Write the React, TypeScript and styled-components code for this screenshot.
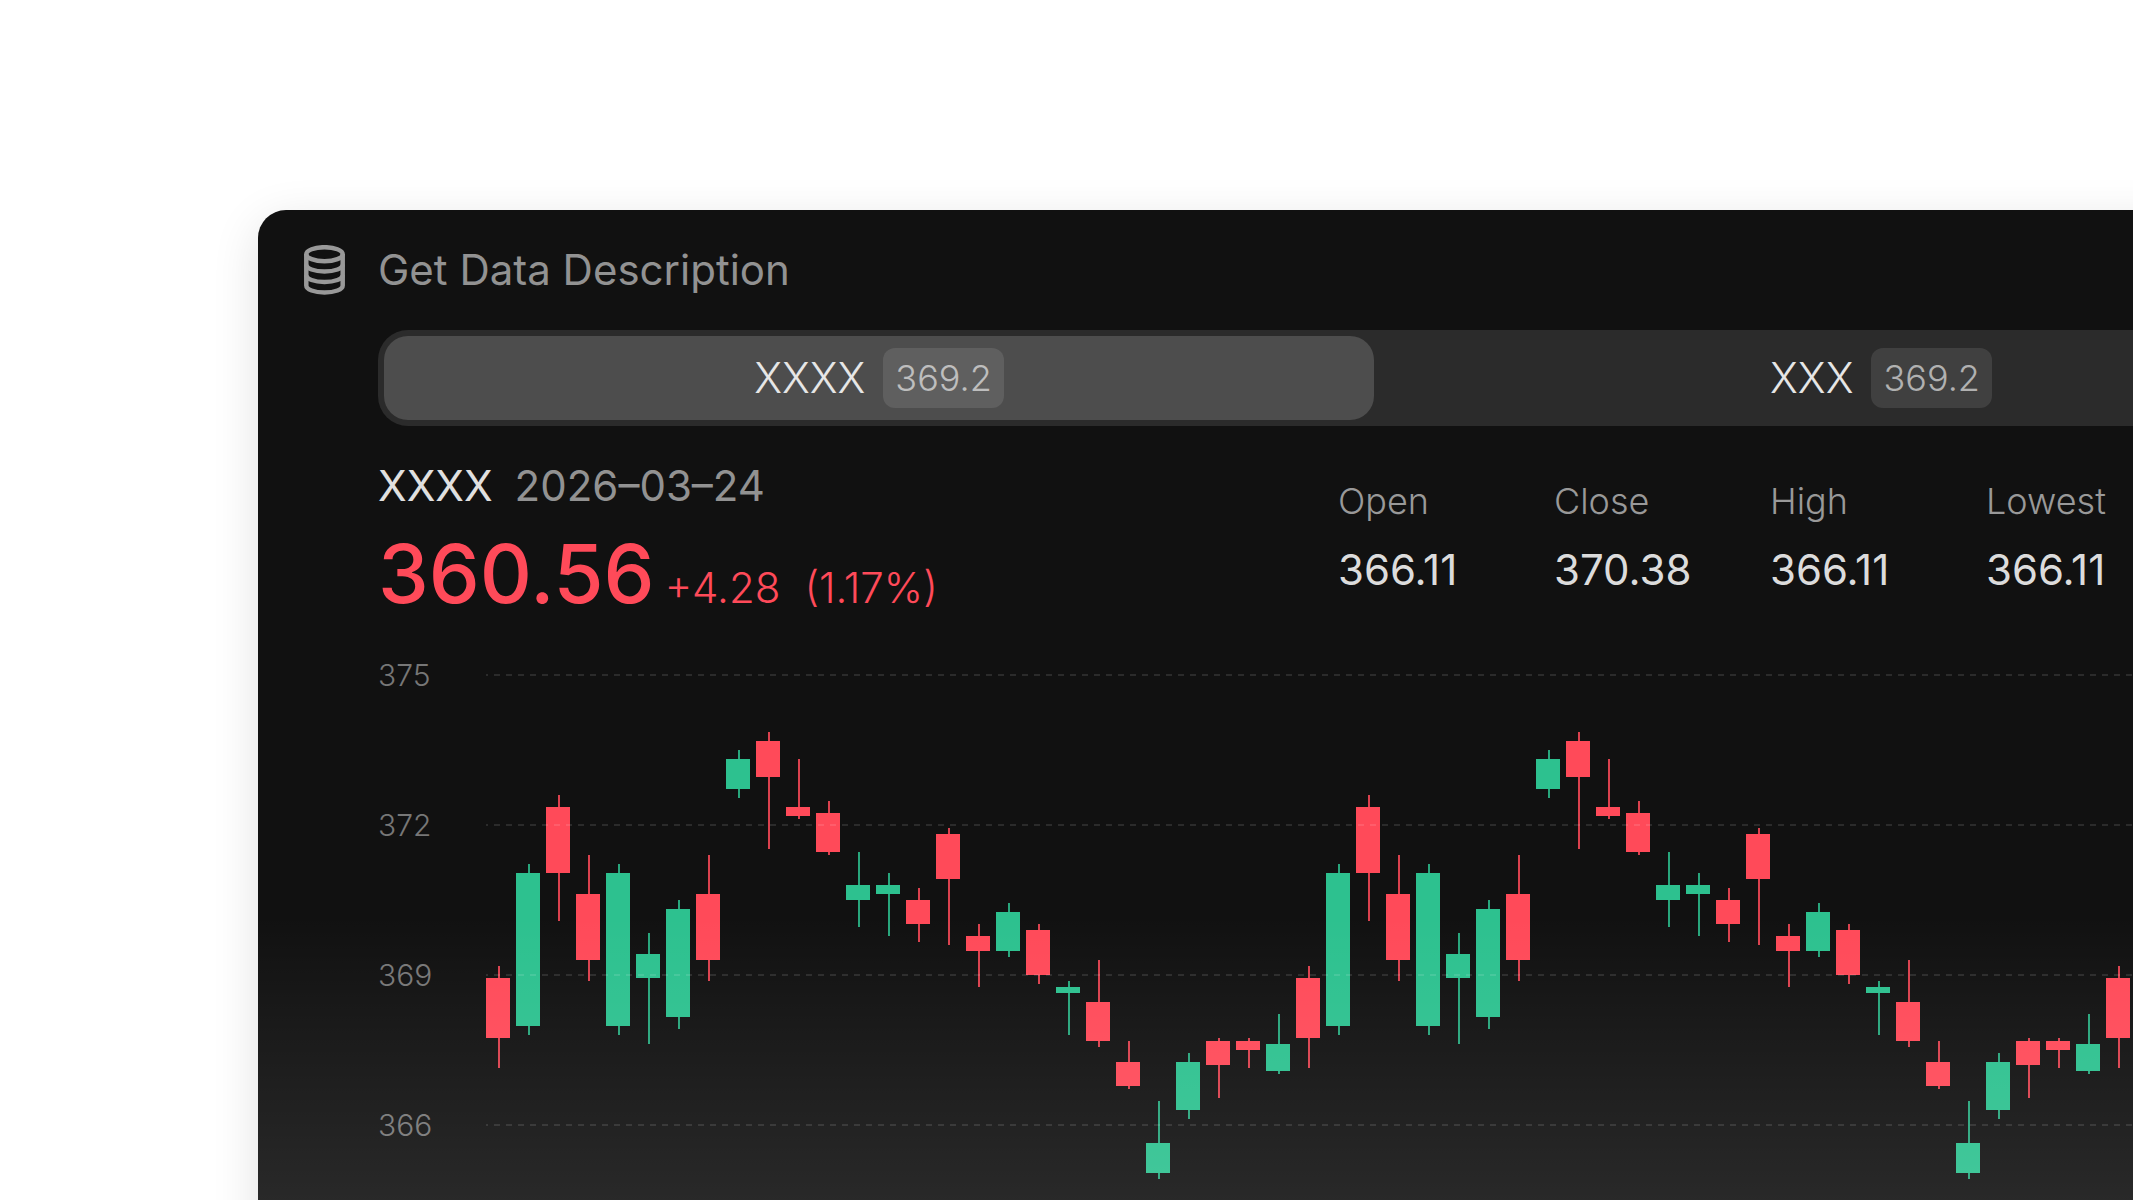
import React from "react";
import styled, { createGlobalStyle } from "styled-components";

const GlobalStyle = createGlobalStyle`
  * { box-sizing: border-box; }
  html, body { margin: 0; background: #fff; overflow: hidden; }
  body { font-family: Inter, Roboto, "Liberation Sans", sans-serif; font-weight: 300; }
`;

const Page = styled.main`
  display: flex;
  min-height: 100vh;
  padding-top: 210px;
  padding-left: 258px;
  overflow: hidden;
`;

const Card = styled.section`
  position: relative;
  flex: 1;
  min-width: 0;
  margin-right: -291px;
  margin-bottom: -60px;
  padding: 30px 42px 0 120px;
  border-radius: 28px;
  background: #111;
  box-shadow: 0 12px 48px rgba(0, 0, 0, 0.12);
  overflow: hidden;
`;

const Glow = styled.div`
  position: absolute;
  inset: auto 0 0 0;
  height: 345px;
  pointer-events: none;
  background: linear-gradient(to bottom, rgba(255, 255, 255, 0), rgba(255, 255, 255, 0.12));
`;

const Header = styled.header`
  display: flex;
  align-items: center;
  gap: 33px;
  height: 60px;
  margin-left: -74px;
  color: #999;
`;

const Title = styled.h1`
  margin: 0;
  color: #929292;
  font-size: 42px;
  line-height: 60px;
  font-weight: 400;
`;

const Tabs = styled.div`
  display: flex;
  gap: 12px;
  margin-top: 30px;
  padding: 6px;
  border-radius: 30px;
  background: #2b2b2b;
`;

const Tab = styled.button<{ $active?: boolean }>`
  flex: 1;
  display: flex;
  align-items: center;
  justify-content: center;
  gap: 18px;
  height: 84px;
  padding: 0;
  border: 0;
  border-radius: 24px;
  background: ${(p) => (p.$active ? "#4d4d4d" : "transparent")};
  color: #e6e6e6;
  font: inherit;
  font-size: 42px;
  line-height: 60px;
`;

const Badge = styled.span`
  padding: 0 12px;
  border-radius: 12px;
  background: rgba(255, 255, 255, 0.1);
  color: rgba(255, 255, 255, 0.6);
  font-size: 36px;
  line-height: 60px;
`;

const Summary = styled.div`
  display: flex;
  justify-content: space-between;
  margin-top: 30px;
  padding-right: 216px;
`;

const Name = styled.div`
  display: flex;
  gap: 22px;
  font-size: 42px;
  line-height: 60px;
  color: #929292;
`;

const Symbol = styled.strong`
  font-weight: 400;
  color: #e0e0e0;
`;

const TradeDate = styled.time`
  font-weight: 400;
`;

const Quote = styled.div`
  display: flex;
  align-items: baseline;
  gap: 10px;
  height: 126px;
  color: #ff4a59;
  font-size: 42px;
  line-height: 116px;
`;

const Price = styled.strong`
  font-size: 81px;
  font-weight: 500;
`;

const Change = styled.span`
  display: flex;
  gap: 24px;
`;

const Stats = styled.dl`
  display: grid;
  grid-template-columns: repeat(4, 180px);
  gap: 36px;
  margin: 18px 0 0;
`;

const StatLabel = styled.dt`
  color: #999;
  font-size: 36px;
  line-height: 54px;
`;

const StatValue = styled.dd`
  margin: 12px 0 0;
  color: #dcdcdc;
  font-size: 42px;
  font-weight: 400;
  line-height: 60px;
`;

const Chart = styled.div`
  display: flex;
  gap: 48px;
  margin-top: 15px;
`;

const Axis = styled.div`
  width: 60px;
  color: #777;
  font-size: 30px;
  line-height: 36px;
`;

const Tick = styled.div`
  height: 150px;
`;

const Plot = styled.svg`
  flex: 1;
  min-width: 0;
  height: 600px;
  margin-top: 2px;
`;

type Candle = { up: boolean; high: number; top: number; bottom: number; low: number };

const c = (up: number, high: number, top: number, bottom: number, low: number): Candle => ({
  up: up === 1, high, top, bottom, low,
});

/* Offsets in plot units below the 375 line; 50 units equal one point. */
const cycle: Candle[] = [
  c(0, 291, 303, 363, 393),
  c(1, 189, 198, 351, 360),
  c(0, 120, 132, 198, 246),
  c(0, 180, 219, 285, 306),
  c(1, 189, 198, 351, 360),
  c(1, 258, 279, 303, 369),
  c(1, 225, 234, 342, 354),
  c(0, 180, 219, 285, 306),
  c(1, 75, 84, 114, 123),
  c(0, 57, 66, 102, 174),
  c(0, 84, 132, 141, 144),
  c(0, 126, 138, 177, 180),
  c(1, 177, 210, 225, 252),
  c(1, 198, 210, 219, 261),
  c(0, 213, 225, 249, 267),
  c(0, 153, 159, 204, 270),
  c(0, 249, 261, 276, 312),
  c(1, 228, 237, 276, 282),
  c(0, 249, 255, 300, 309),
  c(1, 306, 312, 318, 360),
  c(0, 285, 327, 366, 372),
  c(0, 366, 387, 411, 414),
  c(1, 426, 468, 498, 504),
  c(1, 378, 387, 435, 444),
  c(0, 363, 366, 390, 423),
  c(0, 363, 366, 375, 393),
  c(1, 339, 369, 396, 399),
];

const candles = [...cycle, ...cycle, ...cycle].slice(0, 63);
const prices = [375, 372, 369, 366];
const stats = [
  ["Open", "366.11"],
  ["Close", "370.38"],
  ["High", "366.11"],
  ["Lowest", "366.11"],
];

const DatabaseIcon = () => (
  <svg width="41" height="50" viewBox="0 0 41 50" fill="none" stroke="currentColor" strokeWidth="4.5" aria-hidden="true">
    <ellipse cx="20.5" cy="9.2" rx="18.2" ry="7" />
    <path d="M2.300 9v31.500c0 4 8 7 18.200 7s18.200-3 18.200-7V9" />
    <path d="M2.300 19.500c0 4 8 7 18.200 7s18.200-3 18.200-7" />
    <path d="M2.300 30c0 4 8 7 18.200 7s18.200-3 18.200-7" />
  </svg>
);

export default function App() {
  return (
    <>
      <GlobalStyle />
      <Page>
        <Card>
          <Header>
            <DatabaseIcon />
            <Title>Get Data Description</Title>
          </Header>
          <Tabs role="tablist">
            <Tab type="button" role="tab" aria-selected="true" $active>
              XXXX <Badge>369.2</Badge>
            </Tab>
            <Tab type="button" role="tab" aria-selected="false">
              XXX <Badge>369.2</Badge>
            </Tab>
          </Tabs>
          <Summary>
            <div>
              <Name>
                <Symbol>XXXX</Symbol>
                <TradeDate dateTime="2026-03-24">2026–03–24</TradeDate>
              </Name>
              <Quote>
                <Price>360.56</Price>
                <Change>
                  <span>+4.28</span>
                  <span>(1.17%)</span>
                </Change>
              </Quote>
            </div>
            <Stats>
              {stats.map(([label, value]) => (
                <div key={label}>
                  <StatLabel>{label}</StatLabel>
                  <StatValue>{value}</StatValue>
                </div>
              ))}
            </Stats>
          </Summary>
          <Chart>
            <Axis>
              {prices.map((p) => (
                <Tick key={p}>{p}</Tick>
              ))}
            </Axis>
            <Plot role="img" aria-label="Candlestick chart">
              <g transform="translate(0 16)">
                {candles.map((k, i) => (
                  <g key={i} fill={k.up ? "#2dc18f" : "#ff4a59"}>
                    <rect x={i * 30 + 12} y={k.high} width="2" height={k.low - k.high} opacity="0.85" />
                    <rect x={i * 30} y={k.top} width="24" height={k.bottom - k.top} />
                  </g>
                ))}
                {prices.map((p, i) => (
                  <line
                    key={p}
                    x1="0"
                    x2="100%"
                    y1={i * 150}
                    y2={i * 150}
                    stroke="#fff"
                    strokeOpacity="0.11"
                    strokeWidth="2"
                    strokeDasharray="6 6"
                    strokeDashoffset="4"
                  />
                ))}
              </g>
            </Plot>
          </Chart>
          <Glow />
        </Card>
      </Page>
    </>
  );
}
